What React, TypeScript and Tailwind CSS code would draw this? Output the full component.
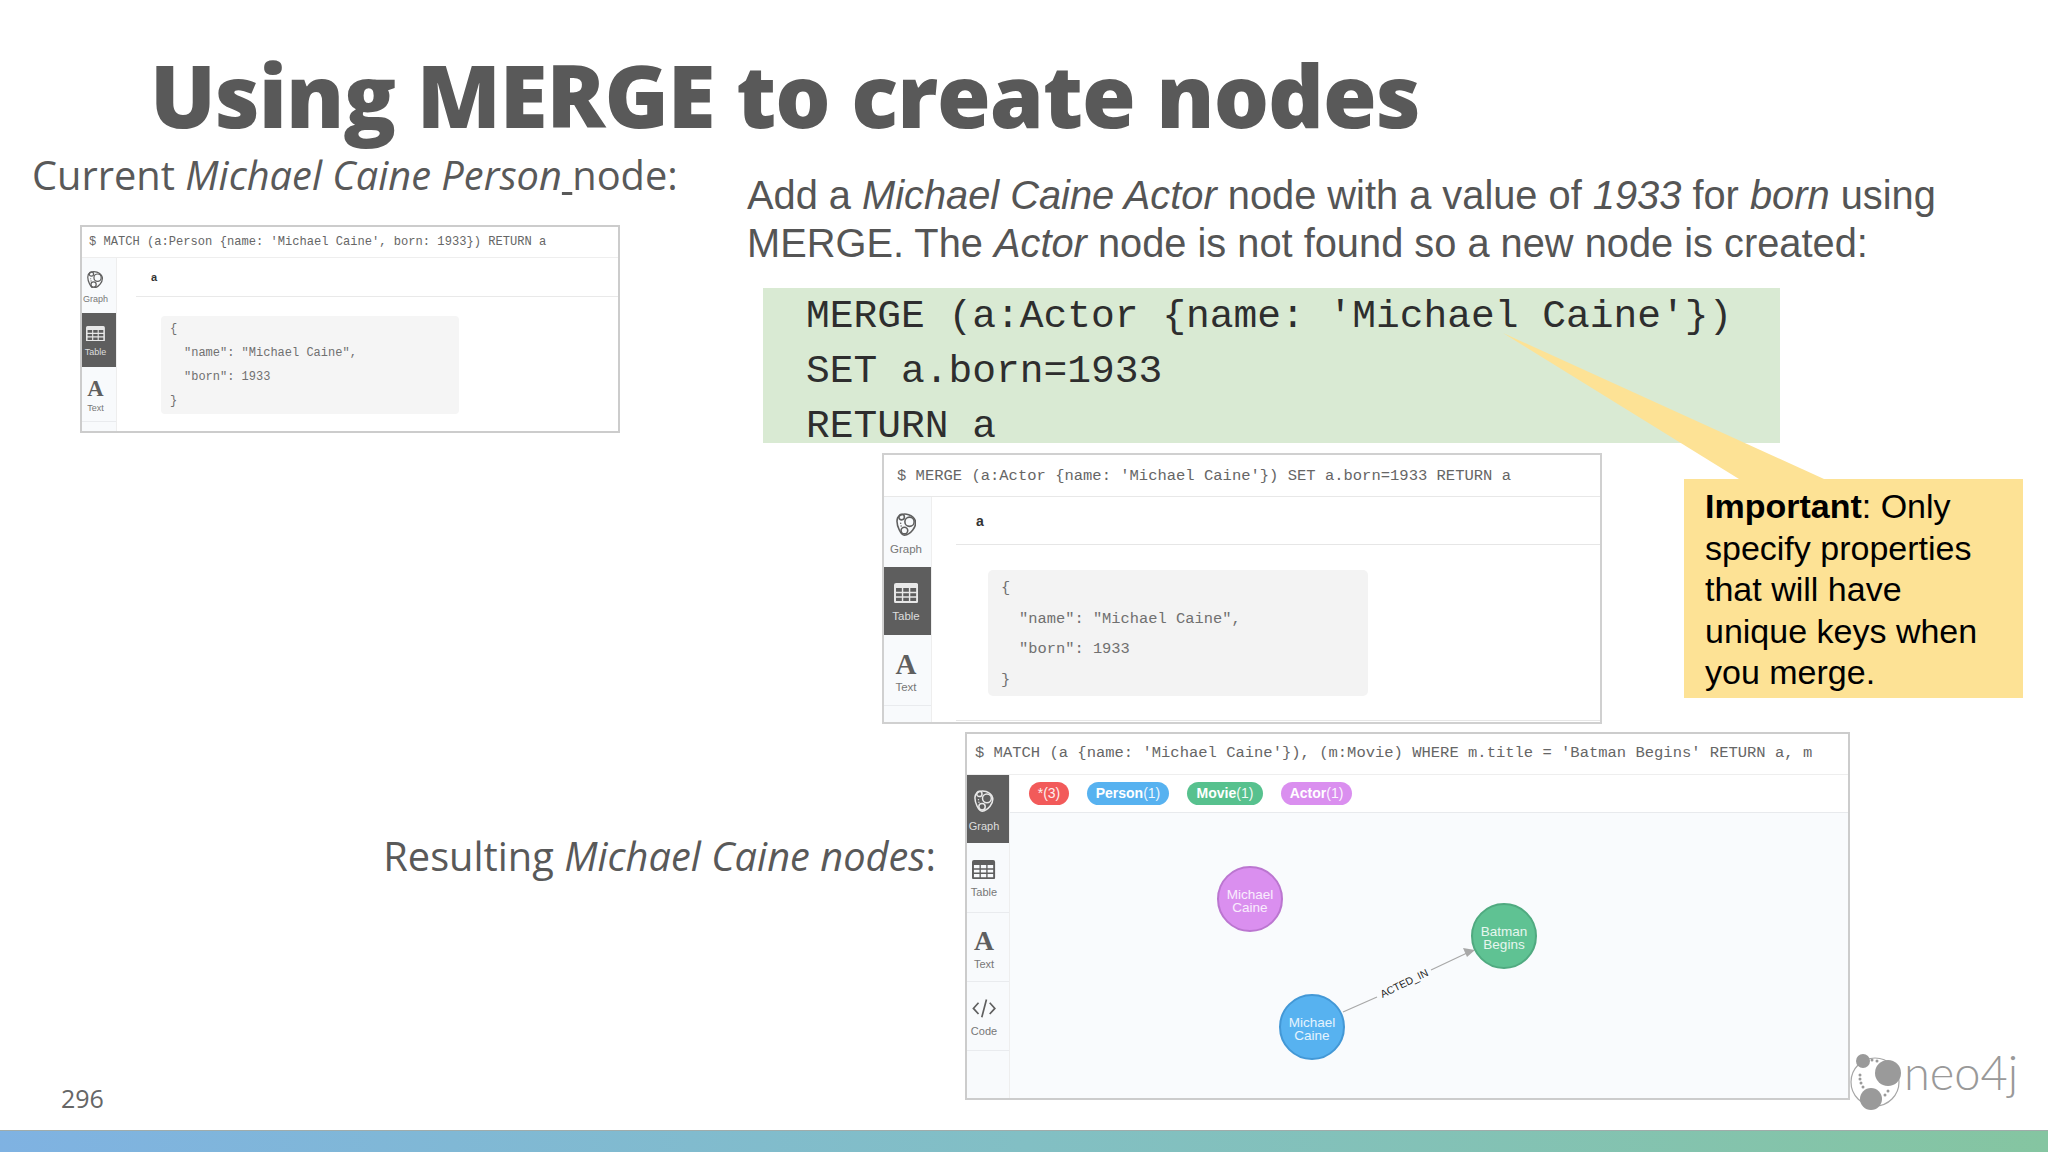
const mono = "font-['Liberation_Mono',monospace]";

function GraphIcon({ color, size }: { color: string; size: number }) {
  return (
    <svg width={size * 0.85} height={size} viewBox="0 0 22 26" fill="none" stroke={color} strokeWidth="1.700">
      <path d="M4 4 C9 0 19 3 21 10 C22 16 16 24 9 25 C5 25 1 15 1 10 C1 7 2 5 4 4Z" />
      <circle cx="6" cy="5.500" r="3" fill="none" />
      <circle cx="14.500" cy="10.500" r="5" />
      <circle cx="9" cy="20" r="3.600" />
      <circle cx="5" cy="12" r="0.800" fill={color} stroke="none" />
      <circle cx="5.500" cy="15" r="0.800" fill={color} stroke="none" />
    </svg>
  );
}

function TableIcon({ color, size }: { color: string; size: number }) {
  return (
    <svg width={size} height={size * 0.84} viewBox="0 0 24 20" fill={color}>
      <path
        fillRule="evenodd"
        d="M2 0h20a2 2 0 0 1 2 2v16a2 2 0 0 1-2 2H2a2 2 0 0 1-2-2V2a2 2 0 0 1 2-2zM2 5v3.500h5.800V5zM9.200 5v3.500h5.600V5zM16.200 5v3.500H22V5zM2 10v3h5.800v-3zM9.200 10v3h5.600v-3zM16.200 10v3H22v-3zM2 14.500v3.300h5.800v-3.300zM9.200 14.500v3.300h5.600v-3.300zM16.200 14.500v3.300H22v-3.300z"
      />
    </svg>
  );
}

function SideTab({
  label,
  icon,
  active,
  h,
  text,
  sep,
  pr,
}: {
  label: string;
  icon: "graph" | "table" | "text" | "code";
  active?: boolean;
  h: number;
  text: number;
  sep?: boolean;
  pr: number;
}) {
  const c = active ? "#e8e8e8" : "#5f5f5f";
  const s = text * 2.1;
  return (
    <div
      className={`flex flex-col items-center justify-center ${active ? "bg-[#5e5e5e]" : ""} ${sep ? "border-b border-[#e9ebee]" : ""}`}
      style={{ height: h, gap: text * 0.45 + 3, paddingRight: pr, paddingTop: 3 }}
    >
      {icon === "graph" && <GraphIcon color={c} size={s} />}
      {icon === "table" && <TableIcon color={c} size={s} />}
      {icon === "text" && (
        <span className="font-['Liberation_Serif',serif] font-bold leading-none" style={{ fontSize: s * 1.2, color: c, height: s }}>
          A
        </span>
      )}
      {icon === "code" && (
        <svg width={s * 1.05} height={s * 0.9} viewBox="0 0 26 22" fill="none" stroke={c} strokeWidth="1.800">
          <path d="M7 5 1.500 11 7 17M19 5l5.500 6L19 17M15.500 1.500 10.500 20.500" />
        </svg>
      )}
      <span className="font-['Liberation_Sans',sans-serif] leading-none" style={{ fontSize: text, color: active ? "#dddddd" : "#777777" }}>
        {label}
      </span>
    </div>
  );
}

function Json({ fs, lh, inner }: { fs: number; lh: number; inner: number }) {
  const rows = ["{", `"name": "Michael Caine",`, `"born": 1933`, "}"];
  return (
    <div className={`${mono} text-[#707070]`} style={{ fontSize: fs, lineHeight: `${lh}px` }}>
      {rows.map((r, i) => (
        <div key={r} className="whitespace-pre" style={{ paddingLeft: i === 1 || i === 2 ? inner : 0 }}>
          {r}
        </div>
      ))}
    </div>
  );
}

function Pill({ label, n, w, bg, ml }: { label: string; n: string; w: number; bg: string; ml: string }) {
  return (
    <div
      className={`h-[23px] rounded-full flex items-center justify-center text-white text-[14px] font-['Liberation_Sans',sans-serif] ${ml}`}
      style={{ width: w, background: bg }}
    >
      {label && <b>{label}</b>}
      <span className="opacity-90">{n}</span>
    </div>
  );
}

function Node({ a, b, className }: { a: string; b: string; className: string }) {
  return (
    <div
      className={`absolute w-[66px] h-[66px] rounded-full border-2 pt-[3px] flex flex-col items-center justify-center text-white/85 text-[13.500px] leading-[13px] font-['Liberation_Sans',sans-serif] ${className}`}
    >
      <span>{a}</span>
      <span>{b}</span>
    </div>
  );
}

export default function App() {
  return (
    <div className="relative w-[2048px] h-[1152px] overflow-hidden bg-white flex flex-col">
      <h1 className="h-[57px] mt-[66px] pl-[150px] font-['Open_Sans',sans-serif] font-extrabold text-[87px] leading-[57px] text-[#595959] whitespace-nowrap tracking-[-1px]">
        Using MERGE to create nodes
      </h1>

      <div className="flex h-[601px]">
        {/* left column */}
        <div className="w-[747px] shrink-0 flex flex-col">
          <p className="mt-[27px] pl-[32px] h-[50px] font-['Open_Sans',sans-serif] text-[39.800px] leading-[50px] text-[#595959] whitespace-pre">
            Current <i>Michael Caine Person</i>
            <span className="underline"> </span>node:
          </p>
          <div className="ml-[80px] mt-[25px] w-[540px] h-[208px] border-2 border-[#cccccc] bg-white flex flex-col">
            <div className={`${mono} h-[31px] shrink-0 px-[7px] pt-[1px] flex items-center text-[12.100px] text-[#666666] whitespace-nowrap border-b border-[#eeeeee]`}>
              $ MATCH (a:Person {"{"}name: 'Michael Caine', born: 1933{"}"}) RETURN a
            </div>
            <div className="flex flex-1">
              <div className="w-[35px] bg-[#f8fafc] border-r border-[#eeeeee] flex flex-col">
                <SideTab label="Graph" icon="graph" h={55} text={9} pr={7} />
                <SideTab label="Table" icon="table" h={54} text={9} pr={7} active />
                <SideTab label="Text" icon="text" h={55} text={9} pr={7} sep />
              </div>
              <div className="flex-1 flex flex-col">
                <div className="ml-[19px] h-[39px] pl-[15px] flex items-center border-b border-[#e9e9e9] font-['Liberation_Sans',sans-serif] font-bold text-[11px] text-[#333333]">
                  a
                </div>
                <div className="ml-[44px] mt-[19px] w-[298px] h-[98px] rounded-[4px] bg-[#f5f5f5] pl-[9px] pt-[1px]">
                  <Json fs={12} lh={24} inner={14} />
                </div>
              </div>
            </div>
          </div>
        </div>

        {/* right column */}
        <div className="flex-1 flex flex-col">
          <p className="mt-[49px] h-[96px] font-['Liberation_Sans',sans-serif] text-[39.800px] leading-[47.500px] text-[#555555] whitespace-nowrap">
            Add a <i>Michael Caine Actor</i> node with a value of <i>1933</i> for <i>born</i> using
            <br />
            MERGE. The <i>Actor</i> node is not found so a new node is created:
          </p>
          <div className={`${mono} ml-[16px] mt-[20px] w-[1017px] h-[155px] bg-[#d9ead3] pl-[43px] pt-[1px] text-[39.600px] leading-[55px] text-[#2e2e2e] whitespace-pre`}>
            <div>MERGE (a:Actor {"{"}name: 'Michael Caine'{"}"})</div>
            <div>SET a.born=1933</div>
            <div>RETURN a</div>
          </div>
          <div className="flex items-start">
            <div className="ml-[135px] mt-[10px] w-[720px] h-[271px] shrink-0 border-2 border-[#d0d0d0] bg-white flex flex-col">
              <div className={`${mono} h-[42px] shrink-0 pl-[13px] pt-[2px] flex items-center text-[15.500px] text-[#666666] whitespace-nowrap border-b border-[#e8e8e8]`}>
                $ MERGE (a:Actor {"{"}name: 'Michael Caine'{"}"}) SET a.born=1933 RETURN a
              </div>
              <div className="flex flex-1">
                <div className="w-[48px] bg-[#f8fafc] border-r border-[#eeeeee] flex flex-col">
                  <SideTab label="Graph" icon="graph" h={70} text={11.500} pr={3} />
                  <SideTab label="Table" icon="table" h={68} text={11.500} pr={3} active />
                  <SideTab label="Text" icon="text" h={71} text={11.500} pr={3} sep />
                </div>
                <div className="flex-1 flex flex-col">
                  <div className="ml-[24px] h-[48px] pl-[20px] pt-[1px] flex items-center border-b border-[#e6e6e6] font-['Liberation_Sans',sans-serif] font-bold text-[14px] text-[#333333]">
                    a
                  </div>
                  <div className="ml-[56px] mt-[25px] w-[380px] h-[126px] rounded-[5px] bg-[#f3f3f3] pl-[13px] pt-[3px]">
                    <Json fs={15.400} lh={30.500} inner={18} />
                  </div>
                  <div className="mt-[24px] ml-[24px] border-b border-[#e6e6e6]" />
                </div>
              </div>
            </div>
            <div className="relative ml-[82px] mt-[36px] w-[339px] h-[219px] bg-[#fde295] pl-[21px] pt-[7px] font-['Liberation_Sans',sans-serif] text-[34px] leading-[41.500px] text-black">
              <b>Important</b>: Only
              <br />
              specify properties
              <br />
              that will have
              <br />
              unique keys when
              <br />
              you merge.
              <svg className="absolute left-[-181px] top-[-146px]" width="330" height="146" viewBox="0 0 330 146">
                <polygon points="0,0 236,146 321,146" fill="#fde295" />
              </svg>
            </div>
          </div>
        </div>
      </div>

      {/* bottom row */}
      <div className="flex h-[368px] mt-[8px]">
        <p className="w-[936px] pt-[99px] text-right font-['Open_Sans',sans-serif] text-[39.800px] leading-[50px] text-[#595959] whitespace-nowrap">
          Resulting <i>Michael Caine nodes</i>:
        </p>
        <div className="ml-[29px] w-[885px] h-[368px] shrink-0 border-2 border-[#cccccc] bg-white flex flex-col">
          <div className={`${mono} h-[41px] shrink-0 pl-[8px] flex items-center text-[15.500px] text-[#666666] whitespace-nowrap border-b border-[#eeeeee]`}>
            $ MATCH (a {"{"}name: 'Michael Caine'{"}"}), (m:Movie) WHERE m.title = 'Batman Begins' RETURN a, m
          </div>
          <div className="flex flex-1">
            <div className="w-[43px] bg-[#f8fafc] border-r border-[#eeeeee] flex flex-col">
              <SideTab label="Graph" icon="graph" h={68} text={11} pr={8} active />
              <SideTab label="Table" icon="table" h={70} text={11} pr={8} sep />
              <SideTab label="Text" icon="text" h={69} text={11} pr={8} sep />
              <SideTab label="Code" icon="code" h={69} text={11} pr={8} sep />
            </div>
            <div className="flex-1 flex flex-col">
              <div className="h-[38px] shrink-0 flex items-center border-b border-[#e8eaed]">
                <Pill label="" n="*(3)" w={40} bg="#f25a5a" ml="ml-[19px]" />
                <Pill label="Person" n="(1)" w={82} bg="#57b2f0" ml="ml-[18px]" />
                <Pill label="Movie" n="(1)" w={76} bg="#57c18e" ml="ml-[18px]" />
                <Pill label="Actor" n="(1)" w={71} bg="#da8fef" ml="ml-[18px]" />
              </div>
              <div className="relative flex-1 bg-[#f9fbfd]">
                <svg className="absolute left-[0px] top-[0px]" width="800" height="290" viewBox="0 0 800 290">
                  <path d="M333 199 367 184M421 157 457 140" stroke="#a8a8a8" strokeWidth="1.200" fill="none" />
                  <polygon points="465,137 453,135 457,144" fill="#a8a8a8" />
                </svg>
                <span className="absolute left-[368px] top-[164px] -rotate-[26deg] font-['Liberation_Sans',sans-serif] text-[10.500px] leading-[12px] text-[#222222] whitespace-nowrap">
                  ACTED_IN
                </span>
                <Node a="Michael" b="Caine" className="left-[207px] top-[53px] bg-[#da8fef] border-[#bb76d0]" />
                <Node a="Michael" b="Caine" className="left-[269px] top-[181px] bg-[#57b2f0] border-[#4398d6]" />
                <Node a="Batman" b="Begins" className="left-[461px] top-[90px] bg-[#5fc293] border-[#50aa80]" />
              </div>
            </div>
          </div>
        </div>
        <div className="mt-[318px] h-[50px] flex items-start">
          <svg width="54" height="62" viewBox="0 0 54 62" className="shrink-0" fill="#9a9a9a">
            <circle cx="25" cy="32" r="24" fill="none" stroke="#a6a6a6" strokeWidth="1.200" />
            <circle cx="13" cy="11" r="7" />
            <circle cx="38" cy="23" r="13" />
            <circle cx="21" cy="49" r="11" />
            <circle cx="22" cy="10" r="1.500" />
            <circle cx="27" cy="11" r="1.500" />
            <circle cx="10" cy="25" r="1.500" />
            <circle cx="10" cy="29" r="1.500" />
            <circle cx="11" cy="33" r="1.500" />
            <circle cx="13" cy="37" r="1.500" />
            <circle cx="35" cy="45" r="1.500" />
            <circle cx="38" cy="41" r="1.500" />
          </svg>
          <span className="-mt-[3px] font-['Lato',sans-serif] font-light text-[47px] leading-[50px] text-[#999999] whitespace-nowrap">
            neo4j
          </span>
        </div>
      </div>

      <span className="absolute left-[61px] top-[1083px] font-['Open_Sans',sans-serif] text-[25px] leading-[30px] text-[#666666]">
        296
      </span>
      <div className="absolute left-0 right-0 bottom-0 h-[22px] border-t border-[#a0acaa] bg-gradient-to-r from-[#7fb2e2] via-[#82bfc4] to-[#85c5a1]" />
    </div>
  );
}
